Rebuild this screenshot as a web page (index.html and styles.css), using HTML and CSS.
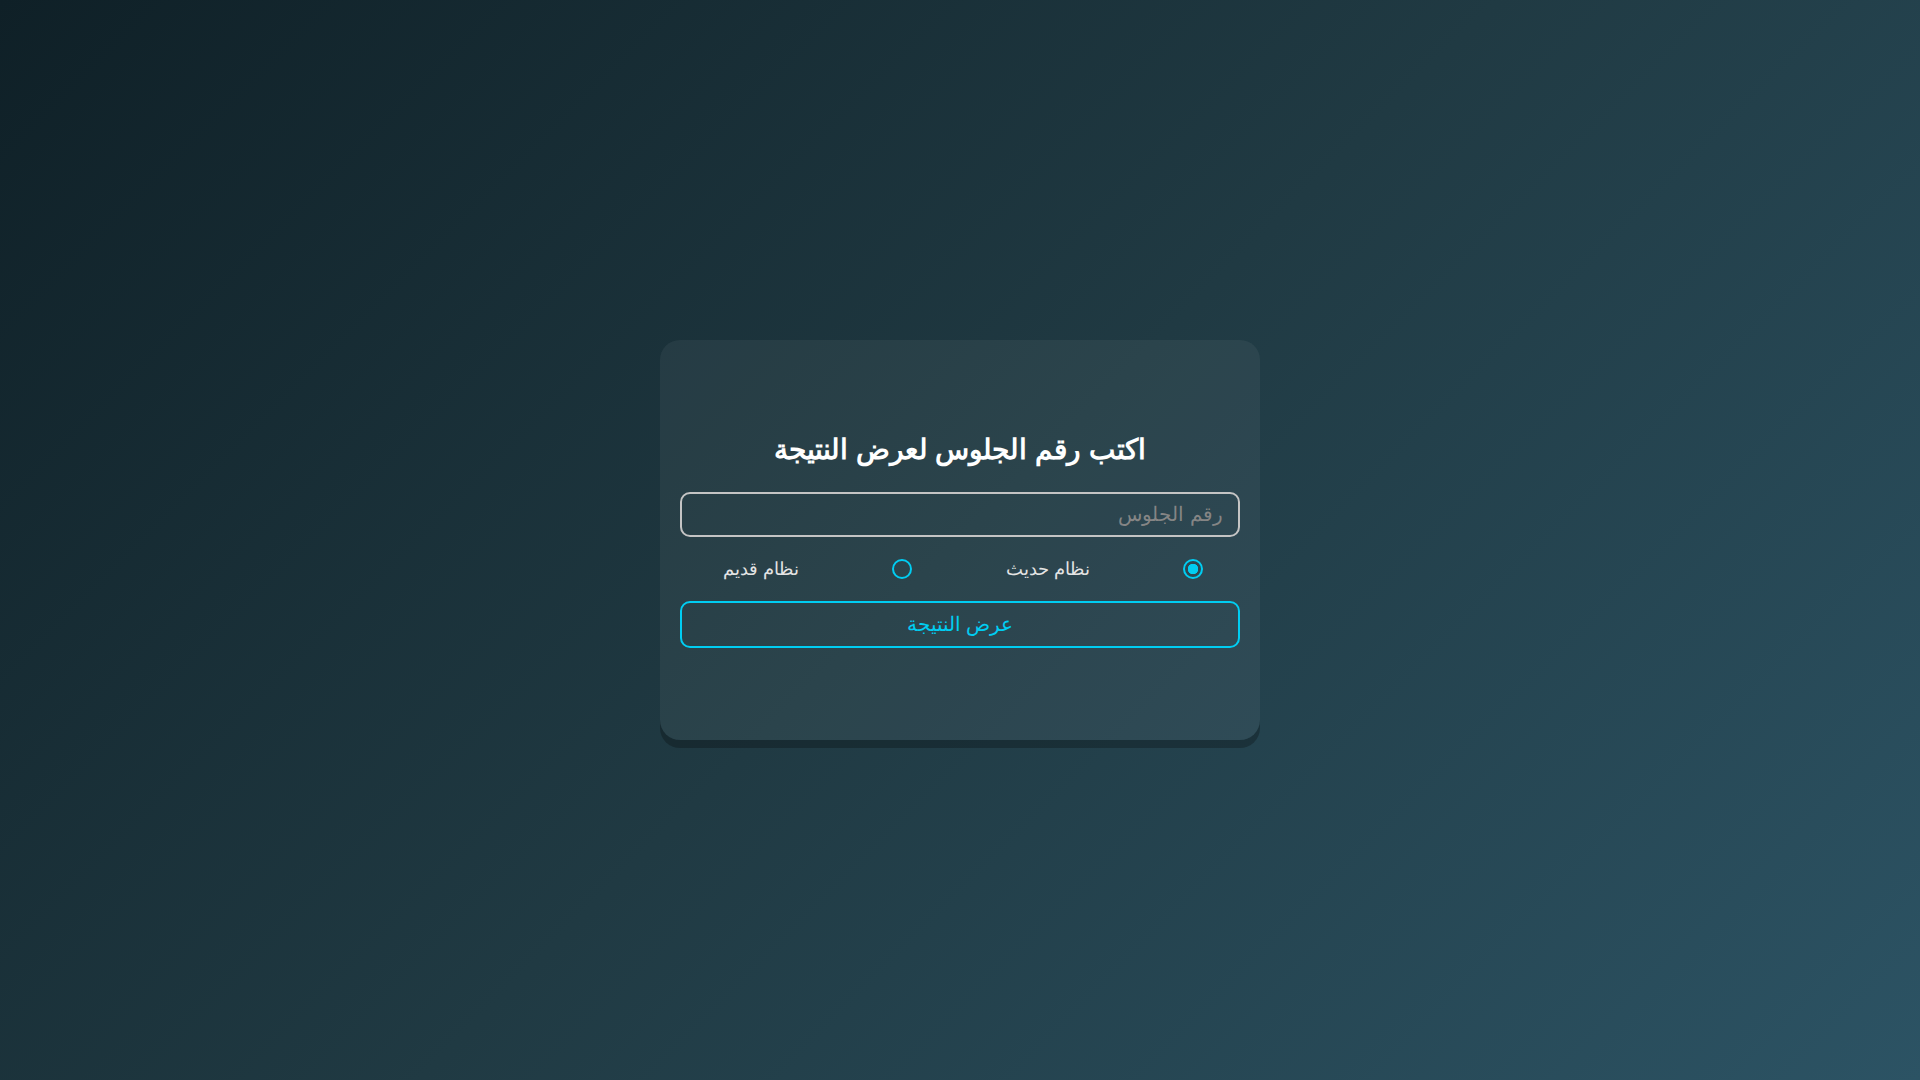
FILE: index.html
```html
<!DOCTYPE html>
<html lang="ar" dir="rtl">
<head>
<meta charset="utf-8">
<title>نتيجة</title>
<link rel="stylesheet" href="styles.css">
</head>
<body>
<main class="card">
  <h2 class="title">اكتب رقم الجلوس لعرض النتيجة</h2>
  <input class="seat" type="text" placeholder="رقم الجلوس">
  <div class="systems">
    <input class="radio" type="radio" name="sys" id="new" checked>
    <label class="sys-label" for="new">نظام حديث</label>
    <input class="radio" type="radio" name="sys" id="old">
    <label class="sys-label" for="old">نظام قديم</label>
  </div>
  <button class="show" type="button">عرض النتيجة</button>
</main>
</body>
</html>
```
FILE: styles.css
```css
html, body {
  margin: 0;
  padding: 0;
}
body {
  min-height: 100vh;
  display: flex;
  align-items: center;
  justify-content: center;
  background: linear-gradient(135deg, #0f2027 0%, #203a43 50%, #2c5364 100%);
  font-family: sans-serif;
}
.card {
  box-sizing: border-box;
  width: 600px;
  height: 400px;
  padding: 20px;
  border-radius: 20px;
  background: rgba(255, 255, 255, 0.05);
  box-shadow: 0 8px 0 rgba(0, 0, 0, 0.25);
  display: flex;
  flex-direction: column;
  justify-content: center;
}
.title {
  margin: 0 0 26px;
  text-align: center;
  color: #ffffff;
  font-size: 28px;
  font-weight: bold;
}
.seat {
  box-sizing: border-box;
  width: 100%;
  height: 45px;
  padding: 0 15px;
  border: 2px solid #c4c4c4;
  border-radius: 10px;
  background: transparent;
  color: #ffffff;
  font-family: inherit;
  font-size: 20px;
  outline: none;
}
.seat::placeholder {
  color: #858585;
}
.systems {
  display: flex;
  align-items: center;
  justify-content: space-between;
  height: 64px;
  padding: 0 37px 0 43px;
}
.radio {
  appearance: none;
  -webkit-appearance: none;
  box-sizing: border-box;
  width: 20px;
  height: 20px;
  margin: 0;
  border: 2px solid #00cdf2;
  border-radius: 50%;
  background: transparent;
}
.radio:checked {
  background: radial-gradient(circle, #00cdf2 0 5px, transparent 5.5px);
}
.sys-label {
  color: #e4e4e4;
  font-size: 18px;
}
.show {
  box-sizing: border-box;
  width: 100%;
  height: 47px;
  border: 2px solid #00cdf2;
  border-radius: 10px;
  background: transparent;
  color: #00cdf2;
  font-family: inherit;
  font-size: 20px;
}
```
